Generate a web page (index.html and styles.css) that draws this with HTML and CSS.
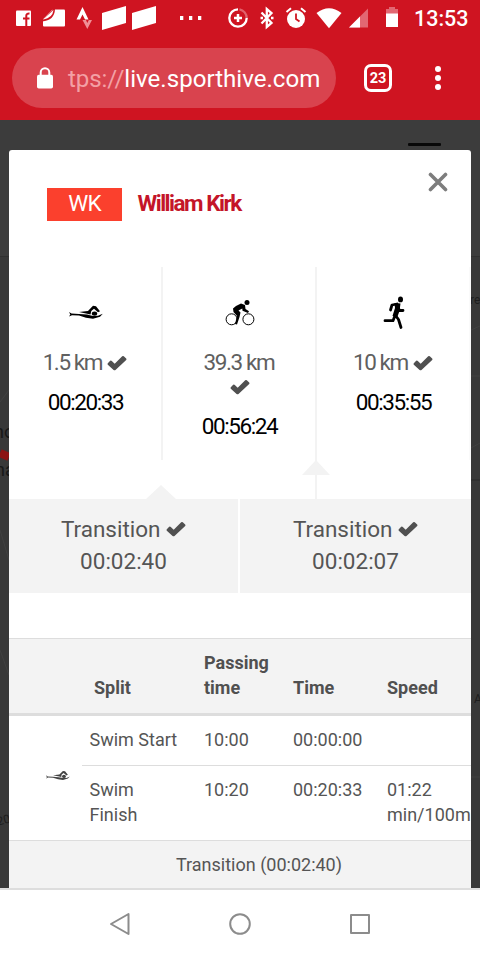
FILE: index.html
```html
<!DOCTYPE html>
<html lang="en">
<head>
<meta charset="utf-8">
<title>William Kirk</title>
<link rel="stylesheet" href="styles.css">
</head>
<body>
<svg width="0" height="0" class="defs" aria-hidden="true">
  <symbol id="check" viewBox="0 0 20 16"><path d="M.8 8.200 3.200 5.800Q4 5.200 4.800 5.900L7.700 8.800 15.200 1.300Q16 .600 16.800 1.300L19.200 3.600Q19.800 4.400 19.200 5.100L8.500 15Q7.500 15.700 6.600 15L.8 9.700Q.200 9 .8 8.200Z"/></symbol>
  <symbol id="swim" viewBox="0 0 34 16"><path d="M0 7 2.500 8.600 10 8.900 18 9.600 24 11 29 10.800 33.800 8.800 31 11.700 24 13.800 17 12.700 10 10.600 3 10.200 0 11.600 1.300 9.600Z"/><path d="M10 7 19 6 24 .8 27 1.200 31 6.200 29 7.300 25 3.800 22.300 6 21.500 9.500 17 8.400Z"/><ellipse cx="25.500" cy="8.600" rx="2.700" ry="2.200"/></symbol>
</svg>
<header class="chrome">
  <div class="status">
    <svg width="408" height="36" viewBox="0 0 408 36" fill="#fff">
      <rect x="16" y="10.500" width="15" height="15.500" rx="1"/><path d="M26.300 26V15.800Q26.300 13.300 29.500 13.500M23 18.500H29.500" fill="none" stroke="#cf1421" stroke-width="2"/>
      <rect x="43" y="9.500" width="22" height="17" rx="1"/><path d="M42 9H55Q54.500 20.500 42 21.500V20.500L53 9.500Z" fill="#cf1421"/><path d="M42 9H53L42 20.500Z" fill="#cf1421"/><path d="M43.500 19 53.500 10Q52.500 18 43.500 19.500Z"/>
      <path d="M76.500 19.500 82.500 7 88.500 19.500H85L82.500 14.500 80 19.500Z"/><path d="M82.500 20H86L87.300 23 88.800 20H92L87.300 29Z" fill="#f08f95"/>
      <path d="M102 13 126 6V23L102 30ZM132 13 156 6V23L132 30ZM180 16H183.300V20H180ZM189 16H192.300V20H189ZM198 16H201.300V20H198Z"/>
      <path d="M239.500 9.400A8.700 8.700 0 0 1 246.700 18" fill="none" stroke="#e0626c" stroke-width="2.300"/><path d="M246.700 18A8.700 8.700 0 1 1 238 9.300" fill="none" stroke="#fff" stroke-width="2.300"/>
      <path d="M238 14V22M234 18H242" fill="none" stroke="#fff" stroke-width="2.500"/>
      <path d="M261.500 12.500 271.500 23 266.800 27V9L271.500 13 261.500 23.500" fill="none" stroke="#fff" stroke-width="2.300"/><path d="M260.500 16.700H263V19.300H260.500ZM271 16.700H273.500V19.300H271Z"/>
      <circle cx="296" cy="19" r="9"/><path d="M286.500 12 291 8.300M301 8.300 305.500 12" stroke="#fff" stroke-width="2"/><path d="M296 13.500V19L299.500 21.500" fill="none" stroke="#cf1421" stroke-width="1.800"/>
      <path d="M316.500 13Q329 3.500 341.500 13L329 28.200Z"/>
      <path d="M368 8.500V27.500H349Z" fill="#e26772"/><path d="M360 16.500V27.500H349Z"/>
      <path d="M389 9V7H395V9H398V14H386V9Z" fill="#e26772"/><path d="M386 13.500H398V27H386Z"/>
    </svg>
    <span class="clock">13:53</span>
  </div>
  <div class="toolbar">
    <div class="address">
      <svg width="16" height="22" viewBox="0 0 16 22"><path d="M3.700 9V5.500A4.300 4.300 0 0 1 12.300 5.500V9" fill="none" stroke="#fff" stroke-width="2"/><rect y="7.700" width="16" height="13.800" rx="1.800" fill="#fff"/></svg>
      <span class="url"><span class="scheme">tps://</span>live.sporthive.com</span>
    </div>
    <div class="tabs">23</div>
    <svg class="more" width="6" height="26" viewBox="0 0 6 26" fill="#fff"><circle cx="3" cy="4" r="3"/><circle cx="3" cy="13" r="3"/><circle cx="3" cy="22" r="3"/></svg>
  </div>
</header>
<main class="page">
  <svg class="map" width="480" height="768" viewBox="0 120 480 768">
    <rect y="120" width="480" height="768" fill="#3c3c3c"/>
    <rect y="256" width="480" height="632" fill="#383838"/>
    <path d="M0 256.500H480" stroke="#303030"/>
    <path d="M0 402 9 390M0 530 9 560M0 650 9 675M471 330 480 326M471 376H480M471 448 480 443M471 777H480" stroke="#414141" fill="none"/>
    <path d="M471 480H480" stroke="#303030" stroke-width="2"/>
    <path d="M0 453 9 457" stroke="#8c1414" stroke-width="8"/>
    <g class="map-labels"><text x="-6" y="438">no</text><text x="-5" y="476">na</text></g>
    <g class="map-small"><text x="470" y="304">re</text><text x="474" y="703">A</text><text x="-3" y="825" transform="rotate(-15 0 822)">20</text></g>
    <rect x="408" y="143" width="33" height="3" rx="1" fill="#080808"/>
  </svg>
  <section class="modal">
    <div class="title">
      <span class="initials">WK</span><h1>William Kirk</h1>
      <svg class="close" width="20" height="20" viewBox="0 0 20 20"><path d="M2.500 2.500 17.500 17.500M17.500 2.500 2.500 17.500" stroke="#7d7d7d" stroke-width="3.600" stroke-linecap="round"/></svg>
    </div>
    <div class="legs">
      <div class="leg">
        <div class="pic"><svg width="34" height="16"><use href="#swim"/></svg></div>
        <p class="distance">1.5 km <svg class="tick"><use href="#check"/></svg></p>
        <p class="time">00:20:33</p>
      </div>
      <div class="leg">
        <div class="pic"><svg width="30" height="28" viewBox="0 0 30 28"><g fill="none" stroke="#000"><circle cx="6.600" cy="20.300" r="5.500"/><circle cx="23.400" cy="20.300" r="5.500"/></g><circle cx="22" cy="3.400" r="2.500"/><path d="M8 9.500Q11 6.500 16 4.500L20 6 20.500 10 24 12.300 23 14 17.500 11.700 17.300 9.500 13.500 11.500 15.500 13.500 14.500 18 12 25.500 10 25 12 17 8.500 13Z"/></svg></div>
        <p class="distance">39.3 km <svg class="tick"><use href="#check"/></svg></p>
        <p class="time">00:56:24</p>
      </div>
      <div class="leg">
        <div class="pic"><svg width="22" height="34" viewBox="0 0 22 34"><ellipse cx="17.500" cy="3.400" rx="2.500" ry="2.900"/><path d="M7.500 14 9 9 14 8M15.500 11 16 14.500H20M2 24.700H10L12.200 19 15.500 23.500 18 31.500" fill="none" stroke="#000" stroke-width="2.800" stroke-linecap="round" stroke-linejoin="round"/><path d="M11.500 7 17.500 7.500 16.500 15 14.500 20.500 9.500 20 12 12Z"/></svg></div>
        <p class="distance">10 km <svg class="tick"><use href="#check"/></svg></p>
        <p class="time">00:35:55</p>
      </div>
    </div>
    <div class="transitions">
      <div class="transition">Transition <svg class="tick"><use href="#check"/></svg><br>00:02:40</div>
      <div class="transition">Transition <svg class="tick"><use href="#check"/></svg><br>00:02:07</div>
    </div>
    <table class="splits">
      <thead><tr><th class="icon-col"></th><th class="split-col">Split</th><th class="passing-col">Passing time</th><th class="time-col">Time</th><th>Speed</th></tr></thead>
      <tbody>
        <tr><td rowspan="2" class="sport"><svg width="24" height="12" viewBox="0 0 34 16"><use href="#swim" width="34" height="16"/></svg></td><td class="line name">Swim Start</td><td class="line">10:00</td><td class="line">00:00:00</td><td class="line"></td></tr>
        <tr><td class="name">Swim<br>Finish</td><td>10:20</td><td>00:20:33</td><td>01:22<br>min/100m</td></tr>
        <tr class="change"><td colspan="5">Transition (00:02:40)</td></tr>
      </tbody>
    </table>
  </section>
</main>
<nav class="navigation">
  <svg width="22" height="24" viewBox="0 0 22 24"><path d="M2 12 19.500 2V22Z"/></svg>
  <svg width="22" height="24" viewBox="0 0 22 24"><circle cx="11" cy="12" r="9.800"/></svg>
  <svg width="22" height="24" viewBox="0 0 22 24"><rect x="2" y="3" width="18" height="18"/></svg>
</nav>
</body>
</html>
```
FILE: styles.css
```css
* { box-sizing: border-box; }
body { margin: 0; width: 480px; height: 960px; overflow: hidden; font-family: Roboto, "Liberation Sans", sans-serif; color: #555; background: #fff; }
svg { display: block; flex: none; }
.defs { position: absolute; }
.chrome { height: 120px; background: #cf1421; color: #fff; }
.status { height: 36px; display: flex; align-items: center; }
.clock { margin-left: 6px; font-size: 21.5px; font-weight: 500; line-height: 36px; padding-top: 2px; }
.toolbar { padding-top: 12px; display: flex; align-items: center; }
.address { width: 324px; height: 60px; margin-left: 12px; border-radius: 30px; background: #d9434e; padding: 0 0 0 25px; display: flex; align-items: center; gap: 15px; }
.url { font-size: 24.1px; white-space: nowrap; padding-top: 2px; }
.scheme { color: #f3a0a5; letter-spacing: -.1px; }
.tabs { width: 28px; height: 28px; margin-left: 28px; border: 3px solid #fff; border-radius: 7px; font-size: 14.5px; font-weight: 700; line-height: 23px; text-align: center; }
.more { margin-left: 43px; }
.page { position: relative; height: 768px; padding: 30px 9px 0; overflow: hidden; }
.map { position: absolute; top: 0; left: 0; }
.map-labels { font-size: 18px; fill: #171717; }
.map-small { font-size: 12px; fill: #1d1d1d; }
.modal { position: relative; height: 738px; background: #fff; border-radius: 3px 3px 0 0; overflow: hidden; }
.title { height: 117px; padding: 38px 0 0 38px; display: flex; align-items: flex-start; letter-spacing: -.9px; line-height: 30px; }
.initials { width: 75px; height: 33px; background: #fb402d; color: #fff; text-align: center; font-size: 22.5px; }
h1 { margin: 0 0 0 15.5px; font-size: 22.5px; font-weight: 700; color: #c41529; letter-spacing: -1.5px; }
.close { margin: -16px 23px 0 auto; }
.legs { height: 232px; display: flex; text-align: center; }
.leg { position: relative; width: 154px; height: 193px; padding: 27px 30px 0; border-right: 2px solid #f3f3f3; }
.leg:nth-child(2) { height: 232px; }
.leg:nth-child(2)::after { content: ""; position: absolute; right: -15px; top: 193px; border: 14px solid transparent; border-top: 0; border-bottom: 15px solid #f3f3f3; }
.leg:nth-child(3) { border-right-color: #fafafa; }
.pic { height: 37px; display: flex; align-items: center; justify-content: center; position: relative; left: 1px; }
.distance, .time { margin: 0; font-size: 22.5px; line-height: 24px; letter-spacing: -1.4px; }
.distance { padding-top: 19px; color: #606060; }
.distance .tick { margin-left: 1px; }
.time { margin-top: 16px; color: #000; padding-left: 1px; }
.tick { display: inline-block; width: 20px; height: 16px; fill: #505050; vertical-align: -1px; }
.transitions { display: grid; grid-template-columns: 229px 231px; gap: 2px; height: 94px; }
.transition { position: relative; background: #f3f3f3; text-align: center; font-size: 22.5px; line-height: 32px; padding-top: 14px; }
.transition .tick { vertical-align: 0; }
.transition:first-child::before { content: ""; position: absolute; top: -14px; left: 137px; border: 15px solid transparent; border-top: 0; border-bottom: 14px solid #f3f3f3; }
.splits { width: 500px; margin-top: 45px; border-collapse: separate; border-spacing: 0; table-layout: fixed; font-size: 18px; line-height: 25px; }
th, td { padding: 11px 0 13px 8px; text-align: left; vertical-align: top; }
th { height: 78px; vertical-align: bottom; background: #f3f3f3; border-top: 1px solid #ddd; border-bottom: 3px solid #ddd; color: #505050; }
.icon-col { width: 73px; }
.split-col { width: 114px; padding-left: 12px; }
.passing-col { width: 89px; }
.time-col { width: 94px; }
.line { height: 50px; border-bottom: 1px solid #ddd; }
.name { padding-left: 7.5px; }
.sport { padding: 0 0 5px 37px; vertical-align: middle; fill: #444; }
.change td { height: 50px; padding: 11px 0 0; background: #f3f3f3; border-top: 1px solid #ddd; text-align: center; }
.navigation { height: 72px; border-top: 2px solid #ddd; display: flex; justify-content: center; gap: 98px; padding-top: 22px; }
.navigation svg { fill: none; stroke: #8c8c8c; stroke-width: 2; stroke-linejoin: round; }
```
